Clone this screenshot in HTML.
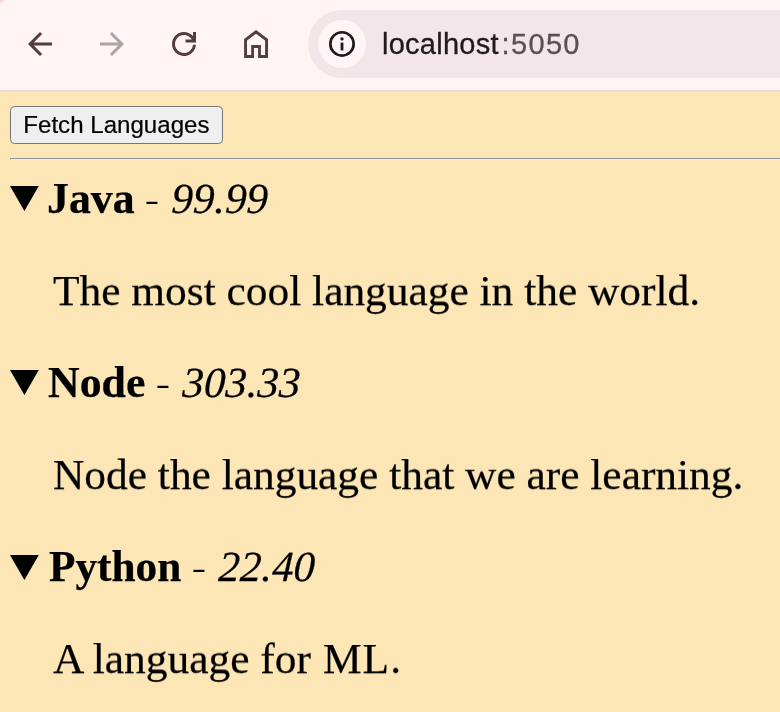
<!DOCTYPE html>
<html lang="en">
<head>
<meta charset="utf-8">
<title>localhost:5050</title>
<style>
html,body{margin:0;padding:0;}
body{width:780px;height:712px;overflow:hidden;position:relative;background:#fce6b5;font-family:"Liberation Serif",serif;color:#000;}
#bar{position:absolute;left:0;top:0;width:780px;height:92px;background:linear-gradient(to bottom,#fff5f4 0,#fff5f4 89.7px,#f3d9df 89.7px,#f3d9df 91.85px,#fce6b5 91.85px);}
#omni{position:absolute;left:308px;top:10.2px;width:520px;height:68px;border-radius:34px;background:#f2e6ea;}
#info{position:absolute;left:318px;top:20px;width:48px;height:48px;border-radius:24px;background:#fff5f4;}
#url{position:absolute;left:382.2px;top:26px;font-family:"Liberation Sans",sans-serif;font-size:29px;line-height:36px;color:#1f1a1c;white-space:nowrap;letter-spacing:0.25px;will-change:transform;-webkit-text-stroke:0.3px;}
#url span{color:#5a4f53;letter-spacing:1.35px;margin-left:2.8px;}
.ic{position:absolute;top:0;left:0;}
#btn{will-change:transform;-webkit-text-stroke:0.2px;position:absolute;left:10px;top:106px;width:212.8px;height:37.7px;box-sizing:border-box;border:1.4px solid #767676;border-radius:4.5px;background:#efefef;font-family:"Liberation Sans",sans-serif;font-size:24.1px;line-height:32px;padding-bottom:1px;text-align:center;color:#000;padding:0;white-space:nowrap;}
#hr{position:absolute;left:10px;top:158px;width:770px;height:1px;background:#90929b;border-bottom:1px solid #eeeef4;border-left:1px solid #90929b;box-sizing:content-box;}
.sum{will-change:transform;-webkit-text-stroke:0.25px;position:absolute;left:47px;font-size:43.4px;line-height:50px;white-space:nowrap;}
.sum b{font-size:43.8px;}
.sum i{font-size:42.9px;display:inline-block;transform:skewX(-2.5deg);transform-origin:0 80%;}
.hy{display:inline-block;transform:translate(-0.4px,2.1px) scale(0.95,0.66);}
.tri{position:absolute;left:0;}
.desc{transform:translateY(-0.9px) scaleY(0.97);transform-origin:0 80%;will-change:transform;-webkit-text-stroke:0.25px;position:absolute;left:53.3px;font-size:43.4px;line-height:50px;white-space:nowrap;}
</style>
</head>
<body>
<div id="bar">
  <div id="omni"></div>
  <div id="info"></div>
  <svg class="ic" width="780" height="92" viewBox="0 0 780 92">
    <path d="M0 0H4.2L0 3.4Z" fill="#fbd3db"/>
    <g fill="#543c41">
      <path transform="translate(22 26) scale(1.5)" d="M7.825 13l5.6 5.6L12 20l-8-8 8-8 1.425 1.4-5.6 5.6H20v2H7.825Z"/>
      <path transform="translate(166 26) scale(1.5)" d="M19.98 12.5A8 8 0 1 1 18 6.71V4h2v7h-7V9h4.2A6 6 0 1 0 17.98 12.5Z"/>
      <path fill-rule="evenodd" d="M244.1 57.9V38.9L256.05 29.9L268 38.9V57.9H258.1V47.9H254V57.9ZM247 55H251.2V45.1H260.9V55H265.1V40.47L256.05 33.66L247 40.47Z"/>
    </g>
    <g fill="#ada3a5">
      <path transform="translate(130 26) scale(-1.5 1.5)" d="M7.825 13l5.6 5.6L12 20l-8-8 8-8 1.425 1.4-5.6 5.6H20v2H7.825Z"/>
    </g>
    <g fill="none" stroke="#1f1a1c" stroke-width="2.7">
      <circle cx="342" cy="43.9" r="11.65"/>
    </g>
    <rect x="340.6" y="42.6" width="2.8" height="7.8" fill="#1f1a1c"/>
    <rect x="340.5" y="37.4" width="3" height="3" rx="0.8" fill="#1f1a1c"/>
  </svg>
  <div id="url">localhost<span>:5050</span></div>
</div>
<button id="btn">Fetch Languages</button>
<div id="hr"></div>

<svg class="tri" style="top:0" width="50" height="712" viewBox="0 0 50 712">
  <path d="M10 186H38.8L24.4 211Z" fill="#000"/>
  <path d="M10 370H38.8L24.4 395Z" fill="#000"/>
  <path d="M10 555H38.8L24.4 580Z" fill="#000"/>
</svg>

<div class="sum" style="top:172.5px;left:46.5px"><b>Java</b> <span class="hy">-</span> <i>99.99</i></div>
<div class="desc" style="top:266px">The most cool language in the world.</div>

<div class="sum" style="top:356.7px;left:48.3px"><b>Node</b> <span class="hy">-</span> <i>303.33</i></div>
<div class="desc" style="top:450px">Node the language that we are learning.</div>

<div class="sum" style="top:541.3px;left:49.3px"><b style="font-size:43.3px">Python</b> <span class="hy">-</span> <i>22.40</i></div>
<div class="desc" style="top:634px">A language for <span style="letter-spacing:1.1px;margin-left:1.2px">ML.</span></div>
</body>
</html>
